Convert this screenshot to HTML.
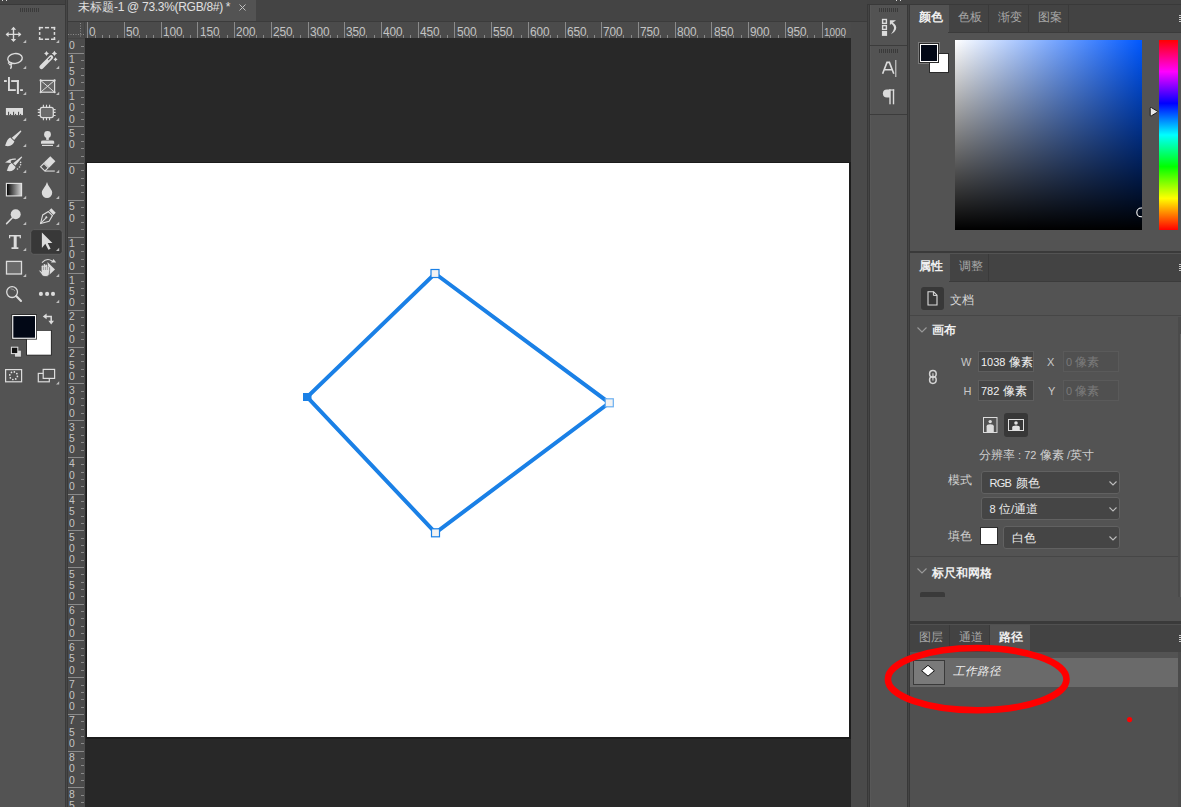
<!DOCTYPE html><html><head><meta charset="utf-8"><style>
*{margin:0;padding:0;box-sizing:border-box}
html,body{width:1181px;height:807px;overflow:hidden;background:#535353;font-family:"Liberation Sans",sans-serif;font-size:12px;color:#d6d6d6}
.a{position:absolute}
.t{position:absolute;white-space:nowrap;line-height:1}
svg{position:absolute;overflow:visible}
</style></head><body><div class="a" style="left:0px;top:0px;width:1181px;height:4px;background:#434343;"></div>
<div class="a" style="left:0px;top:4px;width:65px;height:1px;background:#393939;"></div>
<div class="a" style="left:2px;top:0px;width:1.3px;height:1.2px;background:#dcdcdc;"></div>
<div class="a" style="left:6px;top:0px;width:1.3px;height:1.2px;background:#dcdcdc;"></div>
<div class="a" style="left:896px;top:0px;width:1.3px;height:1.2px;background:#dcdcdc;"></div>
<div class="a" style="left:900px;top:0px;width:1.3px;height:1.2px;background:#dcdcdc;"></div>
<div class="a" style="left:870px;top:4px;width:311px;height:1px;background:#393939;"></div>
<div class="a" style="left:65px;top:0px;width:1px;height:807px;background:#3a3a3a;"></div>
<div class="a" style="left:66px;top:0px;width:1px;height:807px;background:#464646;"></div>
<div class="a" style="left:67px;top:0px;width:1px;height:807px;background:#3a3a3a;"></div>
<div class="a" style="left:68px;top:0px;width:799px;height:21px;background:#444444;"></div>
<div class="a" style="left:68px;top:0px;width:188px;height:21px;background:#535353;"></div>
<div class="a" style="left:68px;top:21px;width:799px;height:1px;background:#3b3b3b;"></div>
<div class="t" style="left:78px;top:1px;font-size:12px;color:#e0e0e0;">未标题<span style="letter-spacing:-0.3px">-1 @ 73.3%(RGB/8#) *</span></div>
<svg style="left:238.6px;top:3.6px" width="7" height="7"><path d="M0.5 0.5L6.5 6.5M6.5 0.5L0.5 6.5" stroke="#c0c0c0" stroke-width="1"/></svg>
<div class="a" style="left:68px;top:22px;width:783px;height:16px;background:#4b4b4b;"></div>
<div class="a" style="left:68px;top:38px;width:17px;height:769px;background:#4b4b4b;"></div>
<div class="a" style="left:68px;top:38px;width:17px;height:1px;background:#444444;"></div>
<div class="a" style="left:84px;top:22px;width:1px;height:16px;background:#434343;"></div>
<div class="a" style="left:85px;top:38px;width:766px;height:769px;background:#282828;"></div>
<div class="a" style="left:851px;top:22px;width:16px;height:785px;background:#4a4a4a;"></div>
<div class="a" style="left:85px;top:22px;width:766px;height:16px;overflow:hidden"><div class="a" style="left:2.20px;top:0;width:1px;height:16px;background:#8a8a8a"></div><div class="t" style="left:4.40px;top:4px;font-size:12px;color:#c4c4c4;transform:scaleX(0.98);transform-origin:0 0">0</div><div class="a" style="left:9.54px;top:13px;width:1px;height:3px;background:#8a8a8a"></div><div class="a" style="left:16.89px;top:13px;width:1px;height:3px;background:#8a8a8a"></div><div class="a" style="left:24.23px;top:13px;width:1px;height:3px;background:#8a8a8a"></div><div class="a" style="left:31.58px;top:13px;width:1px;height:3px;background:#8a8a8a"></div><div class="a" style="left:38.92px;top:0;width:1px;height:16px;background:#8a8a8a"></div><div class="t" style="left:41.12px;top:4px;font-size:12px;color:#c4c4c4;transform:scaleX(0.98);transform-origin:0 0">50</div><div class="a" style="left:46.26px;top:13px;width:1px;height:3px;background:#8a8a8a"></div><div class="a" style="left:53.61px;top:13px;width:1px;height:3px;background:#8a8a8a"></div><div class="a" style="left:60.95px;top:13px;width:1px;height:3px;background:#8a8a8a"></div><div class="a" style="left:68.30px;top:13px;width:1px;height:3px;background:#8a8a8a"></div><div class="a" style="left:75.64px;top:0;width:1px;height:16px;background:#8a8a8a"></div><div class="t" style="left:77.84px;top:4px;font-size:12px;color:#c4c4c4;transform:scaleX(0.98);transform-origin:0 0">100</div><div class="a" style="left:82.98px;top:13px;width:1px;height:3px;background:#8a8a8a"></div><div class="a" style="left:90.33px;top:13px;width:1px;height:3px;background:#8a8a8a"></div><div class="a" style="left:97.67px;top:13px;width:1px;height:3px;background:#8a8a8a"></div><div class="a" style="left:105.02px;top:13px;width:1px;height:3px;background:#8a8a8a"></div><div class="a" style="left:112.36px;top:0;width:1px;height:16px;background:#8a8a8a"></div><div class="t" style="left:114.56px;top:4px;font-size:12px;color:#c4c4c4;transform:scaleX(0.98);transform-origin:0 0">150</div><div class="a" style="left:119.70px;top:13px;width:1px;height:3px;background:#8a8a8a"></div><div class="a" style="left:127.05px;top:13px;width:1px;height:3px;background:#8a8a8a"></div><div class="a" style="left:134.39px;top:13px;width:1px;height:3px;background:#8a8a8a"></div><div class="a" style="left:141.74px;top:13px;width:1px;height:3px;background:#8a8a8a"></div><div class="a" style="left:149.08px;top:0;width:1px;height:16px;background:#8a8a8a"></div><div class="t" style="left:151.28px;top:4px;font-size:12px;color:#c4c4c4;transform:scaleX(0.98);transform-origin:0 0">200</div><div class="a" style="left:156.42px;top:13px;width:1px;height:3px;background:#8a8a8a"></div><div class="a" style="left:163.77px;top:13px;width:1px;height:3px;background:#8a8a8a"></div><div class="a" style="left:171.11px;top:13px;width:1px;height:3px;background:#8a8a8a"></div><div class="a" style="left:178.46px;top:13px;width:1px;height:3px;background:#8a8a8a"></div><div class="a" style="left:185.80px;top:0;width:1px;height:16px;background:#8a8a8a"></div><div class="t" style="left:188.00px;top:4px;font-size:12px;color:#c4c4c4;transform:scaleX(0.98);transform-origin:0 0">250</div><div class="a" style="left:193.14px;top:13px;width:1px;height:3px;background:#8a8a8a"></div><div class="a" style="left:200.49px;top:13px;width:1px;height:3px;background:#8a8a8a"></div><div class="a" style="left:207.83px;top:13px;width:1px;height:3px;background:#8a8a8a"></div><div class="a" style="left:215.18px;top:13px;width:1px;height:3px;background:#8a8a8a"></div><div class="a" style="left:222.52px;top:0;width:1px;height:16px;background:#8a8a8a"></div><div class="t" style="left:224.72px;top:4px;font-size:12px;color:#c4c4c4;transform:scaleX(0.98);transform-origin:0 0">300</div><div class="a" style="left:229.86px;top:13px;width:1px;height:3px;background:#8a8a8a"></div><div class="a" style="left:237.21px;top:13px;width:1px;height:3px;background:#8a8a8a"></div><div class="a" style="left:244.55px;top:13px;width:1px;height:3px;background:#8a8a8a"></div><div class="a" style="left:251.90px;top:13px;width:1px;height:3px;background:#8a8a8a"></div><div class="a" style="left:259.24px;top:0;width:1px;height:16px;background:#8a8a8a"></div><div class="t" style="left:261.44px;top:4px;font-size:12px;color:#c4c4c4;transform:scaleX(0.98);transform-origin:0 0">350</div><div class="a" style="left:266.58px;top:13px;width:1px;height:3px;background:#8a8a8a"></div><div class="a" style="left:273.93px;top:13px;width:1px;height:3px;background:#8a8a8a"></div><div class="a" style="left:281.27px;top:13px;width:1px;height:3px;background:#8a8a8a"></div><div class="a" style="left:288.62px;top:13px;width:1px;height:3px;background:#8a8a8a"></div><div class="a" style="left:295.96px;top:0;width:1px;height:16px;background:#8a8a8a"></div><div class="t" style="left:298.16px;top:4px;font-size:12px;color:#c4c4c4;transform:scaleX(0.98);transform-origin:0 0">400</div><div class="a" style="left:303.30px;top:13px;width:1px;height:3px;background:#8a8a8a"></div><div class="a" style="left:310.65px;top:13px;width:1px;height:3px;background:#8a8a8a"></div><div class="a" style="left:317.99px;top:13px;width:1px;height:3px;background:#8a8a8a"></div><div class="a" style="left:325.34px;top:13px;width:1px;height:3px;background:#8a8a8a"></div><div class="a" style="left:332.68px;top:0;width:1px;height:16px;background:#8a8a8a"></div><div class="t" style="left:334.88px;top:4px;font-size:12px;color:#c4c4c4;transform:scaleX(0.98);transform-origin:0 0">450</div><div class="a" style="left:340.02px;top:13px;width:1px;height:3px;background:#8a8a8a"></div><div class="a" style="left:347.37px;top:13px;width:1px;height:3px;background:#8a8a8a"></div><div class="a" style="left:354.71px;top:13px;width:1px;height:3px;background:#8a8a8a"></div><div class="a" style="left:362.06px;top:13px;width:1px;height:3px;background:#8a8a8a"></div><div class="a" style="left:369.40px;top:0;width:1px;height:16px;background:#8a8a8a"></div><div class="t" style="left:371.60px;top:4px;font-size:12px;color:#c4c4c4;transform:scaleX(0.98);transform-origin:0 0">500</div><div class="a" style="left:376.74px;top:13px;width:1px;height:3px;background:#8a8a8a"></div><div class="a" style="left:384.09px;top:13px;width:1px;height:3px;background:#8a8a8a"></div><div class="a" style="left:391.43px;top:13px;width:1px;height:3px;background:#8a8a8a"></div><div class="a" style="left:398.78px;top:13px;width:1px;height:3px;background:#8a8a8a"></div><div class="a" style="left:406.12px;top:0;width:1px;height:16px;background:#8a8a8a"></div><div class="t" style="left:408.32px;top:4px;font-size:12px;color:#c4c4c4;transform:scaleX(0.98);transform-origin:0 0">550</div><div class="a" style="left:413.46px;top:13px;width:1px;height:3px;background:#8a8a8a"></div><div class="a" style="left:420.81px;top:13px;width:1px;height:3px;background:#8a8a8a"></div><div class="a" style="left:428.15px;top:13px;width:1px;height:3px;background:#8a8a8a"></div><div class="a" style="left:435.50px;top:13px;width:1px;height:3px;background:#8a8a8a"></div><div class="a" style="left:442.84px;top:0;width:1px;height:16px;background:#8a8a8a"></div><div class="t" style="left:445.04px;top:4px;font-size:12px;color:#c4c4c4;transform:scaleX(0.98);transform-origin:0 0">600</div><div class="a" style="left:450.18px;top:13px;width:1px;height:3px;background:#8a8a8a"></div><div class="a" style="left:457.53px;top:13px;width:1px;height:3px;background:#8a8a8a"></div><div class="a" style="left:464.87px;top:13px;width:1px;height:3px;background:#8a8a8a"></div><div class="a" style="left:472.22px;top:13px;width:1px;height:3px;background:#8a8a8a"></div><div class="a" style="left:479.56px;top:0;width:1px;height:16px;background:#8a8a8a"></div><div class="t" style="left:481.76px;top:4px;font-size:12px;color:#c4c4c4;transform:scaleX(0.98);transform-origin:0 0">650</div><div class="a" style="left:486.90px;top:13px;width:1px;height:3px;background:#8a8a8a"></div><div class="a" style="left:494.25px;top:13px;width:1px;height:3px;background:#8a8a8a"></div><div class="a" style="left:501.59px;top:13px;width:1px;height:3px;background:#8a8a8a"></div><div class="a" style="left:508.94px;top:13px;width:1px;height:3px;background:#8a8a8a"></div><div class="a" style="left:516.28px;top:0;width:1px;height:16px;background:#8a8a8a"></div><div class="t" style="left:518.48px;top:4px;font-size:12px;color:#c4c4c4;transform:scaleX(0.98);transform-origin:0 0">700</div><div class="a" style="left:523.62px;top:13px;width:1px;height:3px;background:#8a8a8a"></div><div class="a" style="left:530.97px;top:13px;width:1px;height:3px;background:#8a8a8a"></div><div class="a" style="left:538.31px;top:13px;width:1px;height:3px;background:#8a8a8a"></div><div class="a" style="left:545.66px;top:13px;width:1px;height:3px;background:#8a8a8a"></div><div class="a" style="left:553.00px;top:0;width:1px;height:16px;background:#8a8a8a"></div><div class="t" style="left:555.20px;top:4px;font-size:12px;color:#c4c4c4;transform:scaleX(0.98);transform-origin:0 0">750</div><div class="a" style="left:560.34px;top:13px;width:1px;height:3px;background:#8a8a8a"></div><div class="a" style="left:567.69px;top:13px;width:1px;height:3px;background:#8a8a8a"></div><div class="a" style="left:575.03px;top:13px;width:1px;height:3px;background:#8a8a8a"></div><div class="a" style="left:582.38px;top:13px;width:1px;height:3px;background:#8a8a8a"></div><div class="a" style="left:589.72px;top:0;width:1px;height:16px;background:#8a8a8a"></div><div class="t" style="left:591.92px;top:4px;font-size:12px;color:#c4c4c4;transform:scaleX(0.98);transform-origin:0 0">800</div><div class="a" style="left:597.06px;top:13px;width:1px;height:3px;background:#8a8a8a"></div><div class="a" style="left:604.41px;top:13px;width:1px;height:3px;background:#8a8a8a"></div><div class="a" style="left:611.75px;top:13px;width:1px;height:3px;background:#8a8a8a"></div><div class="a" style="left:619.10px;top:13px;width:1px;height:3px;background:#8a8a8a"></div><div class="a" style="left:626.44px;top:0;width:1px;height:16px;background:#8a8a8a"></div><div class="t" style="left:628.64px;top:4px;font-size:12px;color:#c4c4c4;transform:scaleX(0.98);transform-origin:0 0">850</div><div class="a" style="left:633.78px;top:13px;width:1px;height:3px;background:#8a8a8a"></div><div class="a" style="left:641.13px;top:13px;width:1px;height:3px;background:#8a8a8a"></div><div class="a" style="left:648.47px;top:13px;width:1px;height:3px;background:#8a8a8a"></div><div class="a" style="left:655.82px;top:13px;width:1px;height:3px;background:#8a8a8a"></div><div class="a" style="left:663.16px;top:0;width:1px;height:16px;background:#8a8a8a"></div><div class="t" style="left:665.36px;top:4px;font-size:12px;color:#c4c4c4;transform:scaleX(0.98);transform-origin:0 0">900</div><div class="a" style="left:670.50px;top:13px;width:1px;height:3px;background:#8a8a8a"></div><div class="a" style="left:677.85px;top:13px;width:1px;height:3px;background:#8a8a8a"></div><div class="a" style="left:685.19px;top:13px;width:1px;height:3px;background:#8a8a8a"></div><div class="a" style="left:692.54px;top:13px;width:1px;height:3px;background:#8a8a8a"></div><div class="a" style="left:699.88px;top:0;width:1px;height:16px;background:#8a8a8a"></div><div class="t" style="left:702.08px;top:4px;font-size:12px;color:#c4c4c4;transform:scaleX(0.98);transform-origin:0 0">950</div><div class="a" style="left:707.22px;top:13px;width:1px;height:3px;background:#8a8a8a"></div><div class="a" style="left:714.57px;top:13px;width:1px;height:3px;background:#8a8a8a"></div><div class="a" style="left:721.91px;top:13px;width:1px;height:3px;background:#8a8a8a"></div><div class="a" style="left:729.26px;top:13px;width:1px;height:3px;background:#8a8a8a"></div><div class="a" style="left:736.60px;top:0;width:1px;height:16px;background:#8a8a8a"></div><div class="t" style="left:739.20px;top:5px;font-size:11px;color:#c4c4c4;transform:scaleX(0.9);transform-origin:0 0">1000</div><div class="a" style="left:743.94px;top:13px;width:1px;height:3px;background:#8a8a8a"></div><div class="a" style="left:751.29px;top:13px;width:1px;height:3px;background:#8a8a8a"></div><div class="a" style="left:758.63px;top:13px;width:1px;height:3px;background:#8a8a8a"></div><div class="a" style="left:765.98px;top:13px;width:1px;height:3px;background:#8a8a8a"></div><div class="a" style="left:773.32px;top:0;width:1px;height:16px;background:#8a8a8a"></div><div class="t" style="left:775.92px;top:5px;font-size:11px;color:#c4c4c4;transform:scaleX(0.9);transform-origin:0 0">1050</div><div class="a" style="left:780.66px;top:13px;width:1px;height:3px;background:#8a8a8a"></div><div class="a" style="left:788.01px;top:13px;width:1px;height:3px;background:#8a8a8a"></div><div class="a" style="left:795.35px;top:13px;width:1px;height:3px;background:#8a8a8a"></div><div class="a" style="left:802.70px;top:13px;width:1px;height:3px;background:#8a8a8a"></div></div>
<div class="a" style="left:68px;top:40px;width:17px;height:767px;overflow:hidden"><div class="a" style="left:0;top:-23.78px;width:16px;height:1px;background:#8a8a8a"></div><div class="t" style="left:1px;top:-22.28px;font-size:11.5px;color:#c4c4c4;transform:scaleX(0.9);transform-origin:0 0">2</div><div class="t" style="left:1px;top:-10.98px;font-size:11.5px;color:#c4c4c4;transform:scaleX(0.9);transform-origin:0 0">0</div><div class="t" style="left:1px;top:0.32px;font-size:11.5px;color:#c4c4c4;transform:scaleX(0.9);transform-origin:0 0">0</div><div class="a" style="left:13px;top:-16.44px;width:3px;height:1px;background:#8a8a8a"></div><div class="a" style="left:13px;top:-9.09px;width:3px;height:1px;background:#8a8a8a"></div><div class="a" style="left:13px;top:-1.75px;width:3px;height:1px;background:#8a8a8a"></div><div class="a" style="left:13px;top:5.60px;width:3px;height:1px;background:#8a8a8a"></div><div class="a" style="left:0;top:12.94px;width:16px;height:1px;background:#8a8a8a"></div><div class="t" style="left:1px;top:14.44px;font-size:11.5px;color:#c4c4c4;transform:scaleX(0.9);transform-origin:0 0">1</div><div class="t" style="left:1px;top:25.74px;font-size:11.5px;color:#c4c4c4;transform:scaleX(0.9);transform-origin:0 0">5</div><div class="t" style="left:1px;top:37.04px;font-size:11.5px;color:#c4c4c4;transform:scaleX(0.9);transform-origin:0 0">0</div><div class="a" style="left:13px;top:20.28px;width:3px;height:1px;background:#8a8a8a"></div><div class="a" style="left:13px;top:27.63px;width:3px;height:1px;background:#8a8a8a"></div><div class="a" style="left:13px;top:34.97px;width:3px;height:1px;background:#8a8a8a"></div><div class="a" style="left:13px;top:42.32px;width:3px;height:1px;background:#8a8a8a"></div><div class="a" style="left:0;top:49.66px;width:16px;height:1px;background:#8a8a8a"></div><div class="t" style="left:1px;top:51.16px;font-size:11.5px;color:#c4c4c4;transform:scaleX(0.9);transform-origin:0 0">1</div><div class="t" style="left:1px;top:62.46px;font-size:11.5px;color:#c4c4c4;transform:scaleX(0.9);transform-origin:0 0">0</div><div class="t" style="left:1px;top:73.76px;font-size:11.5px;color:#c4c4c4;transform:scaleX(0.9);transform-origin:0 0">0</div><div class="a" style="left:13px;top:57.00px;width:3px;height:1px;background:#8a8a8a"></div><div class="a" style="left:13px;top:64.35px;width:3px;height:1px;background:#8a8a8a"></div><div class="a" style="left:13px;top:71.69px;width:3px;height:1px;background:#8a8a8a"></div><div class="a" style="left:13px;top:79.04px;width:3px;height:1px;background:#8a8a8a"></div><div class="a" style="left:0;top:86.38px;width:16px;height:1px;background:#8a8a8a"></div><div class="t" style="left:1px;top:87.88px;font-size:11.5px;color:#c4c4c4;transform:scaleX(0.9);transform-origin:0 0">5</div><div class="t" style="left:1px;top:99.18px;font-size:11.5px;color:#c4c4c4;transform:scaleX(0.9);transform-origin:0 0">0</div><div class="a" style="left:13px;top:93.72px;width:3px;height:1px;background:#8a8a8a"></div><div class="a" style="left:13px;top:101.07px;width:3px;height:1px;background:#8a8a8a"></div><div class="a" style="left:13px;top:108.41px;width:3px;height:1px;background:#8a8a8a"></div><div class="a" style="left:13px;top:115.76px;width:3px;height:1px;background:#8a8a8a"></div><div class="a" style="left:0;top:123.10px;width:16px;height:1px;background:#8a8a8a"></div><div class="t" style="left:1px;top:124.60px;font-size:11.5px;color:#c4c4c4;transform:scaleX(0.9);transform-origin:0 0">0</div><div class="a" style="left:13px;top:130.44px;width:3px;height:1px;background:#8a8a8a"></div><div class="a" style="left:13px;top:137.79px;width:3px;height:1px;background:#8a8a8a"></div><div class="a" style="left:13px;top:145.13px;width:3px;height:1px;background:#8a8a8a"></div><div class="a" style="left:13px;top:152.48px;width:3px;height:1px;background:#8a8a8a"></div><div class="a" style="left:0;top:159.82px;width:16px;height:1px;background:#8a8a8a"></div><div class="t" style="left:1px;top:161.32px;font-size:11.5px;color:#c4c4c4;transform:scaleX(0.9);transform-origin:0 0">5</div><div class="t" style="left:1px;top:172.62px;font-size:11.5px;color:#c4c4c4;transform:scaleX(0.9);transform-origin:0 0">0</div><div class="a" style="left:13px;top:167.16px;width:3px;height:1px;background:#8a8a8a"></div><div class="a" style="left:13px;top:174.51px;width:3px;height:1px;background:#8a8a8a"></div><div class="a" style="left:13px;top:181.85px;width:3px;height:1px;background:#8a8a8a"></div><div class="a" style="left:13px;top:189.20px;width:3px;height:1px;background:#8a8a8a"></div><div class="a" style="left:0;top:196.54px;width:16px;height:1px;background:#8a8a8a"></div><div class="t" style="left:1px;top:198.04px;font-size:11.5px;color:#c4c4c4;transform:scaleX(0.9);transform-origin:0 0">1</div><div class="t" style="left:1px;top:209.34px;font-size:11.5px;color:#c4c4c4;transform:scaleX(0.9);transform-origin:0 0">0</div><div class="t" style="left:1px;top:220.64px;font-size:11.5px;color:#c4c4c4;transform:scaleX(0.9);transform-origin:0 0">0</div><div class="a" style="left:13px;top:203.88px;width:3px;height:1px;background:#8a8a8a"></div><div class="a" style="left:13px;top:211.23px;width:3px;height:1px;background:#8a8a8a"></div><div class="a" style="left:13px;top:218.57px;width:3px;height:1px;background:#8a8a8a"></div><div class="a" style="left:13px;top:225.92px;width:3px;height:1px;background:#8a8a8a"></div><div class="a" style="left:0;top:233.26px;width:16px;height:1px;background:#8a8a8a"></div><div class="t" style="left:1px;top:234.76px;font-size:11.5px;color:#c4c4c4;transform:scaleX(0.9);transform-origin:0 0">1</div><div class="t" style="left:1px;top:246.06px;font-size:11.5px;color:#c4c4c4;transform:scaleX(0.9);transform-origin:0 0">5</div><div class="t" style="left:1px;top:257.36px;font-size:11.5px;color:#c4c4c4;transform:scaleX(0.9);transform-origin:0 0">0</div><div class="a" style="left:13px;top:240.60px;width:3px;height:1px;background:#8a8a8a"></div><div class="a" style="left:13px;top:247.95px;width:3px;height:1px;background:#8a8a8a"></div><div class="a" style="left:13px;top:255.29px;width:3px;height:1px;background:#8a8a8a"></div><div class="a" style="left:13px;top:262.64px;width:3px;height:1px;background:#8a8a8a"></div><div class="a" style="left:0;top:269.98px;width:16px;height:1px;background:#8a8a8a"></div><div class="t" style="left:1px;top:271.48px;font-size:11.5px;color:#c4c4c4;transform:scaleX(0.9);transform-origin:0 0">2</div><div class="t" style="left:1px;top:282.78px;font-size:11.5px;color:#c4c4c4;transform:scaleX(0.9);transform-origin:0 0">0</div><div class="t" style="left:1px;top:294.08px;font-size:11.5px;color:#c4c4c4;transform:scaleX(0.9);transform-origin:0 0">0</div><div class="a" style="left:13px;top:277.32px;width:3px;height:1px;background:#8a8a8a"></div><div class="a" style="left:13px;top:284.67px;width:3px;height:1px;background:#8a8a8a"></div><div class="a" style="left:13px;top:292.01px;width:3px;height:1px;background:#8a8a8a"></div><div class="a" style="left:13px;top:299.36px;width:3px;height:1px;background:#8a8a8a"></div><div class="a" style="left:0;top:306.70px;width:16px;height:1px;background:#8a8a8a"></div><div class="t" style="left:1px;top:308.20px;font-size:11.5px;color:#c4c4c4;transform:scaleX(0.9);transform-origin:0 0">2</div><div class="t" style="left:1px;top:319.50px;font-size:11.5px;color:#c4c4c4;transform:scaleX(0.9);transform-origin:0 0">5</div><div class="t" style="left:1px;top:330.80px;font-size:11.5px;color:#c4c4c4;transform:scaleX(0.9);transform-origin:0 0">0</div><div class="a" style="left:13px;top:314.04px;width:3px;height:1px;background:#8a8a8a"></div><div class="a" style="left:13px;top:321.39px;width:3px;height:1px;background:#8a8a8a"></div><div class="a" style="left:13px;top:328.73px;width:3px;height:1px;background:#8a8a8a"></div><div class="a" style="left:13px;top:336.08px;width:3px;height:1px;background:#8a8a8a"></div><div class="a" style="left:0;top:343.42px;width:16px;height:1px;background:#8a8a8a"></div><div class="t" style="left:1px;top:344.92px;font-size:11.5px;color:#c4c4c4;transform:scaleX(0.9);transform-origin:0 0">3</div><div class="t" style="left:1px;top:356.22px;font-size:11.5px;color:#c4c4c4;transform:scaleX(0.9);transform-origin:0 0">0</div><div class="t" style="left:1px;top:367.52px;font-size:11.5px;color:#c4c4c4;transform:scaleX(0.9);transform-origin:0 0">0</div><div class="a" style="left:13px;top:350.76px;width:3px;height:1px;background:#8a8a8a"></div><div class="a" style="left:13px;top:358.11px;width:3px;height:1px;background:#8a8a8a"></div><div class="a" style="left:13px;top:365.45px;width:3px;height:1px;background:#8a8a8a"></div><div class="a" style="left:13px;top:372.80px;width:3px;height:1px;background:#8a8a8a"></div><div class="a" style="left:0;top:380.14px;width:16px;height:1px;background:#8a8a8a"></div><div class="t" style="left:1px;top:381.64px;font-size:11.5px;color:#c4c4c4;transform:scaleX(0.9);transform-origin:0 0">3</div><div class="t" style="left:1px;top:392.94px;font-size:11.5px;color:#c4c4c4;transform:scaleX(0.9);transform-origin:0 0">5</div><div class="t" style="left:1px;top:404.24px;font-size:11.5px;color:#c4c4c4;transform:scaleX(0.9);transform-origin:0 0">0</div><div class="a" style="left:13px;top:387.48px;width:3px;height:1px;background:#8a8a8a"></div><div class="a" style="left:13px;top:394.83px;width:3px;height:1px;background:#8a8a8a"></div><div class="a" style="left:13px;top:402.17px;width:3px;height:1px;background:#8a8a8a"></div><div class="a" style="left:13px;top:409.52px;width:3px;height:1px;background:#8a8a8a"></div><div class="a" style="left:0;top:416.86px;width:16px;height:1px;background:#8a8a8a"></div><div class="t" style="left:1px;top:418.36px;font-size:11.5px;color:#c4c4c4;transform:scaleX(0.9);transform-origin:0 0">4</div><div class="t" style="left:1px;top:429.66px;font-size:11.5px;color:#c4c4c4;transform:scaleX(0.9);transform-origin:0 0">0</div><div class="t" style="left:1px;top:440.96px;font-size:11.5px;color:#c4c4c4;transform:scaleX(0.9);transform-origin:0 0">0</div><div class="a" style="left:13px;top:424.20px;width:3px;height:1px;background:#8a8a8a"></div><div class="a" style="left:13px;top:431.55px;width:3px;height:1px;background:#8a8a8a"></div><div class="a" style="left:13px;top:438.89px;width:3px;height:1px;background:#8a8a8a"></div><div class="a" style="left:13px;top:446.24px;width:3px;height:1px;background:#8a8a8a"></div><div class="a" style="left:0;top:453.58px;width:16px;height:1px;background:#8a8a8a"></div><div class="t" style="left:1px;top:455.08px;font-size:11.5px;color:#c4c4c4;transform:scaleX(0.9);transform-origin:0 0">4</div><div class="t" style="left:1px;top:466.38px;font-size:11.5px;color:#c4c4c4;transform:scaleX(0.9);transform-origin:0 0">5</div><div class="t" style="left:1px;top:477.68px;font-size:11.5px;color:#c4c4c4;transform:scaleX(0.9);transform-origin:0 0">0</div><div class="a" style="left:13px;top:460.92px;width:3px;height:1px;background:#8a8a8a"></div><div class="a" style="left:13px;top:468.27px;width:3px;height:1px;background:#8a8a8a"></div><div class="a" style="left:13px;top:475.61px;width:3px;height:1px;background:#8a8a8a"></div><div class="a" style="left:13px;top:482.96px;width:3px;height:1px;background:#8a8a8a"></div><div class="a" style="left:0;top:490.30px;width:16px;height:1px;background:#8a8a8a"></div><div class="t" style="left:1px;top:491.80px;font-size:11.5px;color:#c4c4c4;transform:scaleX(0.9);transform-origin:0 0">5</div><div class="t" style="left:1px;top:503.10px;font-size:11.5px;color:#c4c4c4;transform:scaleX(0.9);transform-origin:0 0">0</div><div class="t" style="left:1px;top:514.40px;font-size:11.5px;color:#c4c4c4;transform:scaleX(0.9);transform-origin:0 0">0</div><div class="a" style="left:13px;top:497.64px;width:3px;height:1px;background:#8a8a8a"></div><div class="a" style="left:13px;top:504.99px;width:3px;height:1px;background:#8a8a8a"></div><div class="a" style="left:13px;top:512.33px;width:3px;height:1px;background:#8a8a8a"></div><div class="a" style="left:13px;top:519.68px;width:3px;height:1px;background:#8a8a8a"></div><div class="a" style="left:0;top:527.02px;width:16px;height:1px;background:#8a8a8a"></div><div class="t" style="left:1px;top:528.52px;font-size:11.5px;color:#c4c4c4;transform:scaleX(0.9);transform-origin:0 0">5</div><div class="t" style="left:1px;top:539.82px;font-size:11.5px;color:#c4c4c4;transform:scaleX(0.9);transform-origin:0 0">5</div><div class="t" style="left:1px;top:551.12px;font-size:11.5px;color:#c4c4c4;transform:scaleX(0.9);transform-origin:0 0">0</div><div class="a" style="left:13px;top:534.36px;width:3px;height:1px;background:#8a8a8a"></div><div class="a" style="left:13px;top:541.71px;width:3px;height:1px;background:#8a8a8a"></div><div class="a" style="left:13px;top:549.05px;width:3px;height:1px;background:#8a8a8a"></div><div class="a" style="left:13px;top:556.40px;width:3px;height:1px;background:#8a8a8a"></div><div class="a" style="left:0;top:563.74px;width:16px;height:1px;background:#8a8a8a"></div><div class="t" style="left:1px;top:565.24px;font-size:11.5px;color:#c4c4c4;transform:scaleX(0.9);transform-origin:0 0">6</div><div class="t" style="left:1px;top:576.54px;font-size:11.5px;color:#c4c4c4;transform:scaleX(0.9);transform-origin:0 0">0</div><div class="t" style="left:1px;top:587.84px;font-size:11.5px;color:#c4c4c4;transform:scaleX(0.9);transform-origin:0 0">0</div><div class="a" style="left:13px;top:571.08px;width:3px;height:1px;background:#8a8a8a"></div><div class="a" style="left:13px;top:578.43px;width:3px;height:1px;background:#8a8a8a"></div><div class="a" style="left:13px;top:585.77px;width:3px;height:1px;background:#8a8a8a"></div><div class="a" style="left:13px;top:593.12px;width:3px;height:1px;background:#8a8a8a"></div><div class="a" style="left:0;top:600.46px;width:16px;height:1px;background:#8a8a8a"></div><div class="t" style="left:1px;top:601.96px;font-size:11.5px;color:#c4c4c4;transform:scaleX(0.9);transform-origin:0 0">6</div><div class="t" style="left:1px;top:613.26px;font-size:11.5px;color:#c4c4c4;transform:scaleX(0.9);transform-origin:0 0">5</div><div class="t" style="left:1px;top:624.56px;font-size:11.5px;color:#c4c4c4;transform:scaleX(0.9);transform-origin:0 0">0</div><div class="a" style="left:13px;top:607.80px;width:3px;height:1px;background:#8a8a8a"></div><div class="a" style="left:13px;top:615.15px;width:3px;height:1px;background:#8a8a8a"></div><div class="a" style="left:13px;top:622.49px;width:3px;height:1px;background:#8a8a8a"></div><div class="a" style="left:13px;top:629.84px;width:3px;height:1px;background:#8a8a8a"></div><div class="a" style="left:0;top:637.18px;width:16px;height:1px;background:#8a8a8a"></div><div class="t" style="left:1px;top:638.68px;font-size:11.5px;color:#c4c4c4;transform:scaleX(0.9);transform-origin:0 0">7</div><div class="t" style="left:1px;top:649.98px;font-size:11.5px;color:#c4c4c4;transform:scaleX(0.9);transform-origin:0 0">0</div><div class="t" style="left:1px;top:661.28px;font-size:11.5px;color:#c4c4c4;transform:scaleX(0.9);transform-origin:0 0">0</div><div class="a" style="left:13px;top:644.52px;width:3px;height:1px;background:#8a8a8a"></div><div class="a" style="left:13px;top:651.87px;width:3px;height:1px;background:#8a8a8a"></div><div class="a" style="left:13px;top:659.21px;width:3px;height:1px;background:#8a8a8a"></div><div class="a" style="left:13px;top:666.56px;width:3px;height:1px;background:#8a8a8a"></div><div class="a" style="left:0;top:673.90px;width:16px;height:1px;background:#8a8a8a"></div><div class="t" style="left:1px;top:675.40px;font-size:11.5px;color:#c4c4c4;transform:scaleX(0.9);transform-origin:0 0">7</div><div class="t" style="left:1px;top:686.70px;font-size:11.5px;color:#c4c4c4;transform:scaleX(0.9);transform-origin:0 0">5</div><div class="t" style="left:1px;top:698.00px;font-size:11.5px;color:#c4c4c4;transform:scaleX(0.9);transform-origin:0 0">0</div><div class="a" style="left:13px;top:681.24px;width:3px;height:1px;background:#8a8a8a"></div><div class="a" style="left:13px;top:688.59px;width:3px;height:1px;background:#8a8a8a"></div><div class="a" style="left:13px;top:695.93px;width:3px;height:1px;background:#8a8a8a"></div><div class="a" style="left:13px;top:703.28px;width:3px;height:1px;background:#8a8a8a"></div><div class="a" style="left:0;top:710.62px;width:16px;height:1px;background:#8a8a8a"></div><div class="t" style="left:1px;top:712.12px;font-size:11.5px;color:#c4c4c4;transform:scaleX(0.9);transform-origin:0 0">8</div><div class="t" style="left:1px;top:723.42px;font-size:11.5px;color:#c4c4c4;transform:scaleX(0.9);transform-origin:0 0">0</div><div class="t" style="left:1px;top:734.72px;font-size:11.5px;color:#c4c4c4;transform:scaleX(0.9);transform-origin:0 0">0</div><div class="a" style="left:13px;top:717.96px;width:3px;height:1px;background:#8a8a8a"></div><div class="a" style="left:13px;top:725.31px;width:3px;height:1px;background:#8a8a8a"></div><div class="a" style="left:13px;top:732.65px;width:3px;height:1px;background:#8a8a8a"></div><div class="a" style="left:13px;top:740.00px;width:3px;height:1px;background:#8a8a8a"></div><div class="a" style="left:0;top:747.34px;width:16px;height:1px;background:#8a8a8a"></div><div class="t" style="left:1px;top:748.84px;font-size:11.5px;color:#c4c4c4;transform:scaleX(0.9);transform-origin:0 0">8</div><div class="t" style="left:1px;top:760.14px;font-size:11.5px;color:#c4c4c4;transform:scaleX(0.9);transform-origin:0 0">5</div><div class="t" style="left:1px;top:771.44px;font-size:11.5px;color:#c4c4c4;transform:scaleX(0.9);transform-origin:0 0">0</div><div class="a" style="left:13px;top:754.68px;width:3px;height:1px;background:#8a8a8a"></div><div class="a" style="left:13px;top:762.03px;width:3px;height:1px;background:#8a8a8a"></div><div class="a" style="left:13px;top:769.37px;width:3px;height:1px;background:#8a8a8a"></div><div class="a" style="left:13px;top:776.72px;width:3px;height:1px;background:#8a8a8a"></div></div>
<svg style="left:68px;top:22px" width="16" height="16"><path d="M12.5 1V16M0 12.5H16" stroke="#8a8a8a" stroke-width="1" stroke-dasharray="1 1.5"/></svg>
<div class="a" style="left:86px;top:162px;width:765px;height:577px;background:#1c1c1c;"></div>
<div class="a" style="left:87px;top:163px;width:762px;height:574px;background:#ffffff;"></div>
<svg style="left:0;top:0" width="1181" height="807">
<polygon points="435,273.5 609.3,402.8 435.5,532.8 307.2,397" fill="none" stroke="#1a80e6" stroke-width="4" stroke-linejoin="miter"/>
<rect x="431" y="269.5" width="8" height="8" fill="#f2f2f2" stroke="#1a80e6" stroke-width="1.2"/>
<rect x="605.3" y="398.8" width="8" height="8" fill="#f2f2f2" stroke="#6aaef0" stroke-width="1.2"/>
<rect x="431.5" y="528.8" width="8" height="8" fill="#f2f2f2" stroke="#1a80e6" stroke-width="1.2"/>
<rect x="303" y="393" width="8.5" height="8" fill="#1a80e6"/>
</svg>
<div class="a" style="left:867px;top:4px;width:3px;height:803px;background:#383838;"></div>
<div class="a" style="left:868px;top:5px;width:1px;height:802px;background:#444444;"></div>
<div class="a" style="left:870px;top:5px;width:1px;height:802px;background:#585858;"></div>
<div class="a" style="left:907px;top:5px;width:3px;height:802px;background:#383838;"></div>
<div class="a" style="left:908px;top:5px;width:1px;height:802px;background:#444444;"></div>
<div class="a" style="left:870px;top:45px;width:37px;height:1px;background:#3c3c3c;"></div>
<div class="a" style="left:870px;top:114px;width:37px;height:1px;background:#3c3c3c;"></div>
<svg style="left:0;top:0" width="66" height="400"><rect x="30.7" y="229.6" width="31.6" height="24.7" rx="3" fill="#383838" stroke="#5e5e5e" stroke-width="1"/><rect x="20" y="8" width="1" height="4" fill="#3a3a3a"/><rect x="22" y="8" width="1" height="4" fill="#3a3a3a"/><rect x="24" y="8" width="1" height="4" fill="#3a3a3a"/><rect x="26" y="8" width="1" height="4" fill="#3a3a3a"/><rect x="28" y="8" width="1" height="4" fill="#3a3a3a"/><rect x="30" y="8" width="1" height="4" fill="#3a3a3a"/><rect x="32" y="8" width="1" height="4" fill="#3a3a3a"/><rect x="34" y="8" width="1" height="4" fill="#3a3a3a"/><rect x="36" y="8" width="1" height="4" fill="#3a3a3a"/><rect x="38" y="8" width="1" height="4" fill="#3a3a3a"/><path d="M26.2 39.8L26.2 43.0L23.0 43.0Z" fill="#bdbdbd"/><path d="M59.2 39.8L59.2 43.0L56.0 43.0Z" fill="#bdbdbd"/><path d="M26.2 65.8L26.2 69.0L23.0 69.0Z" fill="#bdbdbd"/><path d="M59.2 65.8L59.2 69.0L56.0 69.0Z" fill="#bdbdbd"/><path d="M26.2 91.8L26.2 95.0L23.0 95.0Z" fill="#bdbdbd"/><path d="M59.2 91.8L59.2 95.0L56.0 95.0Z" fill="#bdbdbd"/><path d="M26.2 117.8L26.2 121.0L23.0 121.0Z" fill="#bdbdbd"/><path d="M59.2 117.8L59.2 121.0L56.0 121.0Z" fill="#bdbdbd"/><path d="M26.2 143.8L26.2 147.0L23.0 147.0Z" fill="#bdbdbd"/><path d="M59.2 143.8L59.2 147.0L56.0 147.0Z" fill="#bdbdbd"/><path d="M26.2 169.8L26.2 173.0L23.0 173.0Z" fill="#bdbdbd"/><path d="M59.2 169.8L59.2 173.0L56.0 173.0Z" fill="#bdbdbd"/><path d="M26.2 195.8L26.2 199.0L23.0 199.0Z" fill="#bdbdbd"/><path d="M59.2 195.8L59.2 199.0L56.0 199.0Z" fill="#bdbdbd"/><path d="M26.2 221.8L26.2 225.0L23.0 225.0Z" fill="#bdbdbd"/><path d="M59.2 221.8L59.2 225.0L56.0 225.0Z" fill="#bdbdbd"/><path d="M26.2 247.8L26.2 251.0L23.0 251.0Z" fill="#bdbdbd"/><path d="M59.2 247.8L59.2 251.0L56.0 251.0Z" fill="#bdbdbd"/><path d="M26.2 273.8L26.2 277.0L23.0 277.0Z" fill="#bdbdbd"/><path d="M59.2 273.8L59.2 277.0L56.0 277.0Z" fill="#bdbdbd"/><path d="M59.2 299.8L59.2 303.0L56.0 303.0Z" fill="#bdbdbd"/><path d="M59.2 381.3L59.2 384.5L56.0 384.5Z" fill="#bdbdbd"/><g stroke="#dcdcdc" stroke-width="1.4" fill="none"><path d="M13.5 27.9V40.9M6.5 34.4H20.5"/></g><g fill="#dcdcdc"><path d="M13.5 26.799999999999997L16.2 29.799999999999997H10.8Z"/><path d="M13.5 42.0L16.2 39.0H10.8Z"/><path d="M5.6 34.4L8.6 31.7V37.1Z"/><path d="M21.4 34.4L18.4 31.7V37.1Z"/></g><rect x="38.9" y="26.9" width="4.200000000000003" height="1.5" fill="#dcdcdc"/><rect x="38.9" y="38.5" width="4.200000000000003" height="1.5" fill="#dcdcdc"/><rect x="44.9" y="26.9" width="4.200000000000003" height="1.5" fill="#dcdcdc"/><rect x="44.9" y="38.5" width="4.200000000000003" height="1.5" fill="#dcdcdc"/><rect x="51" y="26.9" width="4.200000000000003" height="1.5" fill="#dcdcdc"/><rect x="51" y="38.5" width="4.200000000000003" height="1.5" fill="#dcdcdc"/><rect x="38.9" y="26.9" width="1.5" height="3.1000000000000014" fill="#dcdcdc"/><rect x="53.7" y="26.9" width="1.5" height="3.1000000000000014" fill="#dcdcdc"/><rect x="38.9" y="32" width="1.5" height="2.8999999999999986" fill="#dcdcdc"/><rect x="53.7" y="32" width="1.5" height="2.8999999999999986" fill="#dcdcdc"/><rect x="38.9" y="37" width="1.5" height="3" fill="#dcdcdc"/><rect x="53.7" y="37" width="1.5" height="3" fill="#dcdcdc"/><ellipse cx="15" cy="58.5" rx="7.3" ry="4.9" transform="rotate(-8 15 58.5)" fill="none" stroke="#dcdcdc" stroke-width="1.4"/><path d="M8 63.4Q10 61.6 12 63.6Q11 65.4 9 64.4M11 63.9Q12 66.4 10.5 68.9" fill="none" stroke="#dcdcdc" stroke-width="1.3"/><path d="M41.5 66.9L51.1 57.3" stroke="#dcdcdc" stroke-width="4.2" stroke-linecap="round"/><path d="M48.5 59.699999999999996L50.5 57.699999999999996" stroke="#535353" stroke-width="1.1" stroke-linecap="round"/><path d="M46.5 51.1Q47.172 52.828 48.9 53.5Q47.172 54.172 46.5 55.9Q45.828 54.172 44.1 53.5Q45.828 52.828 46.5 51.1Z" fill="#dcdcdc"/><path d="M54.4 50.699999999999996Q55.156 52.644 57.1 53.4Q55.156 54.156 54.4 56.1Q53.644 54.156 51.699999999999996 53.4Q53.644 52.644 54.4 50.699999999999996Z" fill="#dcdcdc"/><path d="M55.5 57.3Q56.088 58.812 57.6 59.4Q56.088 59.988 55.5 61.5Q54.912 59.988 53.4 59.4Q54.912 58.812 55.5 57.3Z" fill="#dcdcdc"/><g fill="#dcdcdc"><rect x="8" y="77.0" width="1.9" height="14"/><rect x="8" y="89.2" width="7.8" height="1.8"/><rect x="4" y="80.10000000000001" width="2.8" height="1.9"/><rect x="11.2" y="80.10000000000001" width="7.7" height="1.9"/><rect x="16.9" y="80.10000000000001" width="2" height="13.9"/><rect x="20.1" y="89.2" width="2.8" height="1.8"/></g><rect x="40.6" y="80.4" width="14" height="11.8" fill="#666" stroke="#dcdcdc" stroke-width="1.2"/><path d="M40.6 80.4L54.6 92.2M54.6 80.4L40.6 92.2" stroke="#dcdcdc" stroke-width="1"/><circle cx="40.6" cy="80.4" r="1.05" fill="#dcdcdc"/><circle cx="54.6" cy="80.4" r="1.05" fill="#dcdcdc"/><circle cx="40.6" cy="92.2" r="1.05" fill="#dcdcdc"/><circle cx="54.6" cy="92.2" r="1.05" fill="#dcdcdc"/><rect x="5.9" y="108.0" width="17.1" height="7.1" fill="#dcdcdc"/><rect x="8" y="111.8" width="1.1" height="3.4000000000000057" fill="#535353"/><rect x="10" y="113.9" width="1.1" height="1.2999999999999972" fill="#535353"/><rect x="13" y="111.8" width="1.1" height="3.4000000000000057" fill="#535353"/><rect x="15" y="113.9" width="1.1" height="1.2999999999999972" fill="#535353"/><rect x="18" y="111.8" width="1.1" height="3.4000000000000057" fill="#535353"/><rect x="20" y="113.9" width="1.1" height="1.2999999999999972" fill="#535353"/><rect x="40.3" y="107.4" width="13" height="10.2" rx="2" fill="#6a6a6a" stroke="#dcdcdc" stroke-width="1.3"/><path d="M43.4 104.80000000000001V107.4M43.4 117.60000000000001V120.2M46.5 104.80000000000001V107.4M46.5 117.60000000000001V120.2M49.6 104.80000000000001V107.4M49.6 117.60000000000001V120.2M37.8 109.60000000000001H40.3M53.3 109.60000000000001H55.6M37.8 112.4H40.3M53.3 112.4H55.6M37.8 115.5H40.3M53.3 115.5H55.6" stroke="#dcdcdc" stroke-width="1.1"/><g transform="translate(20.9 131.0) rotate(45)"><path d="M-0.6 0Q0 -0.6 0.6 0L1.7 11.2H-1.7Z M-2.9 12.1H2.9C4.4 15.2 3.6 19.2 -0.8 21.6C-1.4 19.2 -4.4 15.8 -2.9 12.1Z" fill="#dcdcdc"/></g><circle cx="47.5" cy="134.4" r="3.4" fill="#dcdcdc"/><rect x="46.2" y="136.9" width="2.6" height="3" fill="#dcdcdc"/><path d="M41 143.70000000000002V141.8Q41 140.6 43 140.6H52.2Q54.2 140.6 54.2 141.8V143.70000000000002Z" fill="#dcdcdc"/><rect x="42" y="144.8" width="11" height="1.2" fill="#dcdcdc"/><g transform="translate(21.8 156.8) rotate(45) scale(0.95)"><path d="M-0.6 0Q0 -0.6 0.6 0L1.7 11.2H-1.7Z M-2.9 12.1H2.9C4.4 15.2 3.6 19.2 -0.8 21.6C-1.4 19.2 -4.4 15.8 -2.9 12.1Z" fill="#dcdcdc"/></g><path d="M9.8 160.5Q12.5 158.8 15.8 159.20000000000002" fill="none" stroke="#dcdcdc" stroke-width="1.2"/><path d="M5 162.6L10.6 158.8L10.9 163.0Z" fill="#dcdcdc"/><circle cx="20.6" cy="162.4" r="0.8" fill="#dcdcdc"/><circle cx="20.6" cy="164.8" r="0.8" fill="#dcdcdc"/><circle cx="19.5" cy="167.0" r="0.8" fill="#dcdcdc"/><circle cx="17.5" cy="169.0" r="0.8" fill="#dcdcdc"/><g transform="translate(47.2 164.4) rotate(45)"><rect x="-3.6" y="-8" width="7.2" height="9" fill="#dcdcdc"/><rect x="-3.05" y="1.6" width="6.1" height="4.8" fill="none" stroke="#dcdcdc" stroke-width="1.1"/></g><rect x="45" y="170.5" width="9.8" height="1.1" fill="#dcdcdc"/><defs><linearGradient id="gg" x1="0" x2="1"><stop offset="0" stop-color="#000"/><stop offset="1" stop-color="#d8d8d8"/></linearGradient></defs><rect x="6.4" y="183.4" width="15.2" height="12.5" fill="url(#gg)" stroke="#e4e4e4" stroke-width="1.1"/><path d="M47 182.0Q47.8 185.4 50.6 188.8Q52.2 190.8 52.2 192.8A5.2 5.2 0 0 1 41.8 192.8Q41.8 190.8 43.4 188.8Q46.2 185.4 47 182.0Z" fill="#dcdcdc"/><circle cx="15.7" cy="214.20000000000002" r="5" fill="#dcdcdc"/><path d="M12.4 217.8L6.6 223.6" stroke="#dcdcdc" stroke-width="1.5" stroke-linecap="round"/><g transform="translate(-0.9 1) rotate(45 47.5 216.4)" fill="none" stroke="#dcdcdc" stroke-width="1.1"><rect x="44.4" y="206.6" width="6.2" height="3.2" fill="#dcdcdc" stroke="none"/><path d="M44.6 211.0H50.4L52 217.4L47.5 224.9L43 217.4Z"/><path d="M47.5 215.8V224.9"/></g><circle cx="46.3" cy="217.20000000000002" r="1" fill="#dcdcdc"/><path d="M9 238.3V235.1H20.9V238.3H19.7V236.5H16.7V247.3H18.4V249.1H11.5V247.3H13.7V236.5H10.2V238.3Z" fill="#dcdcdc"/><path d="M41.9 232.6V248.0L45.3 243.8L48.4 249.8L50.6 248.70000000000002L47.7 243.1H52.4Z" fill="#dcdcdc"/><rect x="6.5" y="261.4" width="15" height="12.6" fill="#6a6a6a" stroke="#dcdcdc" stroke-width="1.3"/><path d="M42 262.59999999999997Q47 257.4 52 261.0" fill="none" stroke="#dcdcdc" stroke-width="1.1"/><path d="M51 262.59999999999997L56.2 262.59999999999997L53.5 259.0Z" fill="#dcdcdc"/><path d="M47.4 262.09999999999997L55 269.4L49.4 274.79999999999995Z" fill="#dcdcdc"/><path d="M40.6 273.0L42.4 275.79999999999995Q43.6 276.59999999999997 46 276.59999999999997Q48.4 276.59999999999997 49.2 274.4L49.6 270.4L49.6 267.59999999999997Q48.8 266.59999999999997 48 267.59999999999997L47.6 265.9Q46.8 264.59999999999997 46 265.9L45.6 265.0Q44.8 263.79999999999995 44 265.0L43.6 266.0Q42.8 265.0 42 266.0L41.8 271.79999999999995L40 270.2Q38.8 269.79999999999995 38.9 271.0Z" fill="#dcdcdc" stroke="#535353" stroke-width="0.7"/><path d="M42.45 266.2V271.4" stroke="#dcdcdc" stroke-width="1.6" stroke-linecap="round"/><path d="M44.45 264.79999999999995V271.4" stroke="#dcdcdc" stroke-width="1.6" stroke-linecap="round"/><path d="M46.4 265.29999999999995V271.4" stroke="#dcdcdc" stroke-width="1.6" stroke-linecap="round"/><path d="M48.3 267.2V271.4" stroke="#dcdcdc" stroke-width="1.6" stroke-linecap="round"/><path d="M43.45 266.9V270.0" stroke="#535353" stroke-width="0.45"/><path d="M45.45 266.9V270.0" stroke="#535353" stroke-width="0.45"/><path d="M47.35 266.9V270.0" stroke="#535353" stroke-width="0.45"/><circle cx="12.1" cy="292.09999999999997" r="5.4" fill="none" stroke="#dcdcdc" stroke-width="1.3"/><path d="M16.2 296.0L21 301.0" stroke="#dcdcdc" stroke-width="2.1" stroke-linecap="round"/><path d="M10.5 288.79999999999995Q13.6 288.79999999999995 15 291.0" fill="none" stroke="#aaa" stroke-width="0.8"/><circle cx="40.9" cy="293.9" r="2.05" fill="#dcdcdc"/><circle cx="47.1" cy="293.9" r="2.05" fill="#dcdcdc"/><circle cx="53" cy="293.9" r="2.05" fill="#dcdcdc"/><rect x="26.2" y="330" width="25.5" height="25.5" fill="#262626"/><rect x="27" y="330.8" width="23.9" height="23.9" fill="#ffffff"/><rect x="11.4" y="314.2" width="25.5" height="25.4" fill="#262626"/><rect x="12.2" y="315" width="23.9" height="23.8" fill="#ffffff"/><rect x="13.3" y="316.1" width="21.7" height="21.6" fill="#020816"/><rect x="14.6" y="350.2" width="6.6" height="6.8" fill="#d8d8d8" stroke="#3a3a3a" stroke-width="0.6"/><rect x="11.4" y="347.2" width="6.4" height="6.4" fill="#111" stroke="#e0e0e0" stroke-width="1"/><path d="M45.5 316.4H51.2V321.5" fill="none" stroke="#dcdcdc" stroke-width="1.5"/><path d="M42.8 316.4L46.6 313.6V319.2Z" fill="#dcdcdc"/><path d="M51.2 324.4L48.4 320.8H54Z" fill="#dcdcdc"/><rect x="5.6" y="369.6" width="16" height="12.2" fill="none" stroke="#dcdcdc" stroke-width="1.2"/><circle cx="17.42" cy="376.47" r="0.85" fill="#e6e6e6"/><circle cx="15.75" cy="378.95" r="0.85" fill="#e6e6e6"/><circle cx="12.83" cy="379.52" r="0.85" fill="#e6e6e6"/><circle cx="10.35" cy="377.85" r="0.85" fill="#e6e6e6"/><circle cx="9.78" cy="374.93" r="0.85" fill="#e6e6e6"/><circle cx="11.45" cy="372.45" r="0.85" fill="#e6e6e6"/><circle cx="14.37" cy="371.88" r="0.85" fill="#e6e6e6"/><circle cx="16.85" cy="373.55" r="0.85" fill="#e6e6e6"/><rect x="38.3" y="373.4" width="11" height="8.4" fill="none" stroke="#dcdcdc" stroke-width="1.2"/><rect x="43.2" y="369.4" width="11.4" height="9" fill="#535353" stroke="#dcdcdc" stroke-width="1.2"/></svg>
<svg style="left:870px;top:0" width="37" height="120"><rect x="9" y="8" width="1" height="4" fill="#3a3a3a"/><rect x="11" y="8" width="1" height="4" fill="#3a3a3a"/><rect x="13" y="8" width="1" height="4" fill="#3a3a3a"/><rect x="15" y="8" width="1" height="4" fill="#3a3a3a"/><rect x="17" y="8" width="1" height="4" fill="#3a3a3a"/><rect x="19" y="8" width="1" height="4" fill="#3a3a3a"/><rect x="21" y="8" width="1" height="4" fill="#3a3a3a"/><rect x="23" y="8" width="1" height="4" fill="#3a3a3a"/><rect x="25" y="8" width="1" height="4" fill="#3a3a3a"/><rect x="27" y="8" width="1" height="4" fill="#3a3a3a"/><rect x="9" y="49" width="1" height="4" fill="#3a3a3a"/><rect x="11" y="49" width="1" height="4" fill="#3a3a3a"/><rect x="13" y="49" width="1" height="4" fill="#3a3a3a"/><rect x="15" y="49" width="1" height="4" fill="#3a3a3a"/><rect x="17" y="49" width="1" height="4" fill="#3a3a3a"/><rect x="19" y="49" width="1" height="4" fill="#3a3a3a"/><rect x="21" y="49" width="1" height="4" fill="#3a3a3a"/><rect x="23" y="49" width="1" height="4" fill="#3a3a3a"/><rect x="25" y="49" width="1" height="4" fill="#3a3a3a"/><rect x="27" y="49" width="1" height="4" fill="#3a3a3a"/><rect x="12.6" y="19.5" width="3.8" height="3.8" fill="none" stroke="#dcdcdc" stroke-width="1.4"/><rect x="12.6" y="25.6" width="3.8" height="3.8" fill="none" stroke="#dcdcdc" stroke-width="1.4"/><rect x="11.9" y="31" width="5.2" height="4.9" fill="#dcdcdc"/><path d="M19.9 20.2L26 20.2L19.9 24.9Z" fill="#dcdcdc"/><path d="M22.4 22.6Q27.6 25.6 25.8 29.8Q24.6 32.6 21 34.2Q23.6 31.2 24 28.6Q24.3 25.8 21.2 23.8Z" fill="#dcdcdc"/><path d="M12.6 73.8L17 62.4H19.4L23.8 73.8M14.6 69.8H21.8" fill="none" stroke="#dcdcdc" stroke-width="1.6"/><rect x="25.3" y="60" width="1" height="17" fill="#dcdcdc"/><path d="M20 89.4H17A4.1 4.1 0 0 0 17 97.6H20Z" fill="#dcdcdc"/><rect x="19.3" y="89.4" width="1.4" height="14.9" fill="#dcdcdc"/><rect x="22.8" y="89.4" width="1.4" height="14.9" fill="#dcdcdc"/><rect x="19.3" y="89.4" width="4.9" height="1.2" fill="#dcdcdc"/></svg>
<div class="a" style="left:910px;top:5px;width:271px;height:246px;background:#535353;"></div>
<div class="a" style="left:910px;top:4.7px;width:271px;height:28px;background:#434343;"></div>
<div class="a" style="left:910px;top:4.7px;width:39px;height:28px;background:#535353;"></div>
<div class="t" style="left:919.3px;top:12.100000000000001px;font-size:11.5px;color:#f0f0f0;font-weight:bold">颜色</div>
<div class="a" style="left:988px;top:4.7px;width:1px;height:28px;background:#3a3a3a;"></div>
<div class="t" style="left:958.3px;top:12.100000000000001px;font-size:11.5px;color:#a6a6a6;">色板</div>
<div class="a" style="left:1028px;top:4.7px;width:1px;height:28px;background:#3a3a3a;"></div>
<div class="t" style="left:998.3px;top:12.100000000000001px;font-size:11.5px;color:#a6a6a6;">渐变</div>
<div class="a" style="left:1068px;top:4.7px;width:1px;height:28px;background:#3a3a3a;"></div>
<div class="t" style="left:1038.3px;top:12.100000000000001px;font-size:11.5px;color:#a6a6a6;">图案</div>
<div class="a" style="left:910px;top:31.7px;width:271px;height:1px;background:#3b3b3b;"></div>
<div class="a" style="left:910px;top:31.7px;width:38px;height:1px;background:#535353;"></div>
<svg style="left:1178.8px;top:14.7px" width="4" height="8"><path d="M0 0.5H4M0 2.5H4M0 4.5H4M0 6.5H4" stroke="#c8c8c8" stroke-width="1"/></svg>
<div class="a" style="left:918px;top:42px;width:22px;height:22px;background:#7a7a7a;"></div>
<div class="a" style="left:919px;top:43px;width:20px;height:20px;background:#2a2a2a;"></div>
<div class="a" style="left:929px;top:53px;width:20px;height:20px;background:#2a2a2a;"></div>
<div class="a" style="left:930px;top:54px;width:18px;height:18px;background:#ffffff;"></div>
<div class="a" style="left:919px;top:43px;width:20px;height:20px;background:#2a2a2a;"></div>
<div class="a" style="left:920px;top:44px;width:18px;height:18px;background:#ffffff;"></div>
<div class="a" style="left:921px;top:45px;width:16px;height:16px;background:#020816;"></div>
<div class="a" style="left:955px;top:40px;width:187px;height:190px;background:linear-gradient(to bottom,rgba(0,0,0,0),#000),linear-gradient(to right,#fff,#0058ff)"></div>
<div class="a" style="left:1159px;top:40px;width:19px;height:190px;background:linear-gradient(to bottom,#f00 0%,#f0f 16.67%,#00f 33.33%,#0ff 50%,#0f0 66.67%,#ff0 83.33%,#f00 100%)"></div>
<svg style="left:1148px;top:106px" width="12" height="12"><path d="M2.2 2.2Q2.2 1 3.4 1.6L9.4 5.2Q10.2 5.7 9.4 6.2L3.4 9.8Q2.2 10.4 2.2 9.2Z" fill="#e6e6e6" stroke="#1a1a1a" stroke-width="1"/></svg>
<div class="a" style="left:955px;top:40px;width:187px;height:190px;overflow:hidden"><svg style="left:0;top:0" width="187" height="190"><circle cx="186.2" cy="172.4" r="4.4" fill="none" stroke="#fff" stroke-width="1.1"/></svg></div>
<div class="a" style="left:910px;top:251px;width:271px;height:2px;background:#3a3a3a;"></div>
<div class="a" style="left:910px;top:253px;width:271px;height:368px;background:#535353;"></div>
<div class="a" style="left:910px;top:253.9px;width:271px;height:28px;background:#434343;"></div>
<div class="a" style="left:910px;top:253.9px;width:39.5px;height:28px;background:#535353;"></div>
<div class="t" style="left:919.3px;top:261.3px;font-size:11.5px;color:#f0f0f0;font-weight:bold">属性</div>
<div class="a" style="left:988px;top:253.9px;width:1px;height:28px;background:#3a3a3a;"></div>
<div class="t" style="left:958.8px;top:261.3px;font-size:11.5px;color:#a6a6a6;">调整</div>
<div class="a" style="left:910px;top:280.9px;width:271px;height:1px;background:#3b3b3b;"></div>
<div class="a" style="left:910px;top:280.9px;width:38.5px;height:1px;background:#535353;"></div>
<svg style="left:1178.8px;top:263.9px" width="4" height="8"><path d="M0 0.5H4M0 2.5H4M0 4.5H4M0 6.5H4" stroke="#c8c8c8" stroke-width="1"/></svg>
<div class="a" style="left:921px;top:287px;width:23px;height:23px;background:#383838;border-radius:3px"></div>
<svg style="left:921px;top:287px" width="23" height="23"><path d="M7 4.8H12.6L16 8.2V18H7Z" fill="none" stroke="#dcdcdc" stroke-width="1.1"/><path d="M12.4 4.8V8.4H16" fill="none" stroke="#dcdcdc" stroke-width="1"/></svg>
<div class="t" style="left:950px;top:294px;font-size:12px;color:#d8d8d8;">文档</div>
<div class="a" style="left:910px;top:315px;width:271px;height:1px;background:#464646;"></div>
<svg style="left:917px;top:327px" width="10" height="6"><path d="M0.5 0.5L5 5L9.5 0.5" fill="none" stroke="#9a9a9a" stroke-width="1.1"/></svg>
<div class="t" style="left:932px;top:324px;font-size:12px;color:#f0f0f0;font-weight:bold">画布</div>
<div class="a" style="left:1178px;top:317px;width:3px;height:280px;background:#4b4b4b;"></div>
<div class="a" style="left:1180px;top:334px;width:1px;height:263px;background:#626262;"></div>
<div class="t" style="left:961px;top:357px;font-size:11px;color:#c8c8c8;">W</div>
<div class="t" style="left:963.5px;top:386px;font-size:11px;color:#c8c8c8;">H</div>
<div class="t" style="left:1047px;top:357px;font-size:11px;color:#c8c8c8;">X</div>
<div class="t" style="left:1048px;top:386px;font-size:11px;color:#c8c8c8;">Y</div>
<div class="a" style="left:978px;top:351px;width:56px;height:21px;background:#454545;border:1px solid #5e5e5e"></div>
<div class="t" style="left:981px;top:355.8px;font-size:12px;color:#f0f0f0;"><span style="font-size:11px">1038</span> 像素</div>
<div class="a" style="left:978px;top:380px;width:56px;height:21px;background:#454545;border:1px solid #5e5e5e"></div>
<div class="t" style="left:981px;top:384.8px;font-size:12px;color:#f0f0f0;"><span style="font-size:11px">782</span> 像素</div>
<div class="a" style="left:1063px;top:351px;width:56px;height:21px;background:#505050;border:1px solid #5a5a5a"></div>
<div class="t" style="left:1066px;top:355.8px;font-size:12px;color:#7a7a7a;"><span style="font-size:11px">0</span> 像素</div>
<div class="a" style="left:1063px;top:380px;width:56px;height:21px;background:#505050;border:1px solid #5a5a5a"></div>
<div class="t" style="left:1066px;top:384.8px;font-size:12px;color:#7a7a7a;"><span style="font-size:11px">0</span> 像素</div>
<svg style="left:927px;top:368px" width="12" height="18"><rect x="2.6" y="2.4" width="6.6" height="7" rx="3.3" fill="none" stroke="#d4d4d4" stroke-width="1.5"/><rect x="2.6" y="8.4" width="6.6" height="7" rx="3.3" fill="none" stroke="#d4d4d4" stroke-width="1.5"/><rect x="5.4" y="5.2" width="1.1" height="7.4" fill="#d4d4d4"/></svg>
<svg style="left:982px;top:416px" width="16" height="18"><rect x="1.5" y="1.5" width="13.5" height="15" fill="none" stroke="#dcdcdc" stroke-width="1"/><circle cx="8.2" cy="5.6" r="1.7" fill="#dcdcdc"/><path d="M4.6 16V10.2Q4.6 8.2 8.2 8.2Q11.8 8.2 11.8 10.2V16Z" fill="#dcdcdc"/></svg>
<div class="a" style="left:1004px;top:413px;width:24px;height:24px;background:#383838;border-radius:3px"></div>
<svg style="left:1004px;top:413px" width="24" height="24"><rect x="4.5" y="6.5" width="15" height="11" fill="none" stroke="#e0e0e0" stroke-width="1"/><circle cx="12" cy="10" r="1.8" fill="#e0e0e0"/><path d="M8.2 17V14.4Q8.2 12.6 12 12.6Q15.8 12.6 15.8 14.4V17Z" fill="#e0e0e0"/></svg>
<div class="t" style="left:979px;top:449px;font-size:12px;color:#cfcfcf;">分辨率<span style="font-size:11px">&nbsp;:&nbsp;72</span> 像素 <span style="font-size:11px">/</span>英寸</div>
<div class="t" style="left:948px;top:474px;font-size:12px;color:#cfcfcf;">模式</div>
<div class="t" style="left:948px;top:530px;font-size:12px;color:#cfcfcf;">填色</div>
<div class="a" style="left:980.5px;top:471px;width:139px;height:23px;background:#454545;border:1px solid #616161;border-radius:3px"></div>
<div class="t" style="left:989.5px;top:477px;font-size:12px;color:#ececec;"><span style="font-size:11px;letter-spacing:-0.7px;margin-right:1.6px">RGB</span> 颜色</div>
<svg style="left:1108.5px;top:481px" width="8" height="5"><path d="M0.5 0.5L4 4L7.5 0.5" fill="none" stroke="#bdbdbd" stroke-width="1.1"/></svg>
<div class="a" style="left:980.5px;top:497px;width:139px;height:23px;background:#454545;border:1px solid #616161;border-radius:3px"></div>
<div class="t" style="left:989.5px;top:503px;font-size:12px;color:#ececec;"><span style="font-size:11px">8</span> 位<span style="font-size:11px">/</span>通道</div>
<svg style="left:1108.5px;top:507px" width="8" height="5"><path d="M0.5 0.5L4 4L7.5 0.5" fill="none" stroke="#bdbdbd" stroke-width="1.1"/></svg>
<div class="a" style="left:1002.5px;top:526px;width:117px;height:23px;background:#454545;border:1px solid #616161;border-radius:3px"></div>
<div class="t" style="left:1012px;top:532px;font-size:12px;color:#ececec;">白色</div>
<svg style="left:1108.5px;top:536px" width="8" height="5"><path d="M0.5 0.5L4 4L7.5 0.5" fill="none" stroke="#bdbdbd" stroke-width="1.1"/></svg>
<div class="a" style="left:980px;top:527px;width:18px;height:18px;background:#2e2e2e;"></div>
<div class="a" style="left:981px;top:528px;width:16px;height:16px;background:#ffffff;"></div>
<div class="a" style="left:910px;top:556px;width:268px;height:1px;background:#464646;"></div>
<svg style="left:917px;top:568px" width="10" height="6"><path d="M0.5 0.5L5 5L9.5 0.5" fill="none" stroke="#9a9a9a" stroke-width="1.1"/></svg>
<div class="t" style="left:932px;top:566.5px;font-size:12px;color:#f0f0f0;font-weight:bold">标尺和网格</div>
<div class="a" style="left:920px;top:592px;width:25px;height:5px;background:#3a3a3a;border-radius:2px 2px 0 0"></div>
<div class="a" style="left:910px;top:621px;width:271px;height:3px;background:#3a3a3a;"></div>
<div class="a" style="left:910px;top:624px;width:271px;height:183px;background:#505050;"></div>
<div class="a" style="left:910px;top:624.5px;width:271px;height:28px;background:#434343;"></div>
<div class="a" style="left:949px;top:624.5px;width:1px;height:28px;background:#3a3a3a;"></div>
<div class="t" style="left:919.3px;top:631.9px;font-size:11.5px;color:#a6a6a6;">图层</div>
<div class="a" style="left:989px;top:624.5px;width:1px;height:28px;background:#3a3a3a;"></div>
<div class="t" style="left:959.3px;top:631.9px;font-size:11.5px;color:#a6a6a6;">通道</div>
<div class="a" style="left:990px;top:624.5px;width:39.5px;height:28px;background:#535353;"></div>
<div class="t" style="left:999.3px;top:631.9px;font-size:11.5px;color:#f0f0f0;font-weight:bold">路径</div>
<div class="a" style="left:910px;top:651.5px;width:271px;height:1px;background:#3b3b3b;"></div>
<div class="a" style="left:990px;top:651.5px;width:38.5px;height:1px;background:#535353;"></div>
<svg style="left:1178.8px;top:634.5px" width="4" height="8"><path d="M0 0.5H4M0 2.5H4M0 4.5H4M0 6.5H4" stroke="#c8c8c8" stroke-width="1"/></svg>
<div class="a" style="left:910px;top:652px;width:271px;height:6px;background:#535353;"></div>
<div class="a" style="left:910px;top:658px;width:268px;height:29px;background:#6a6a6a;"></div>
<div class="a" style="left:913px;top:660px;width:32px;height:25px;background:#7a7a7a;border:1px solid #3a3a3a"></div>
<svg style="left:913px;top:660px" width="32" height="25"><path d="M15 5.3L21.4 10.7L15 16.1L8.6 10.7Z" fill="#fff" stroke="#111" stroke-width="1"/></svg>
<div class="t" style="left:953px;top:665.6px;font-size:11.5px;color:#f0f0f0;font-style:italic">工作路径</div>
<div class="a" style="left:1178px;top:652px;width:3px;height:155px;background:#4b4b4b;"></div>
<svg style="left:0;top:0" width="1181" height="807"><ellipse cx="977.2" cy="679.15" rx="89.3" ry="31.1" fill="none" stroke="#ff0000" stroke-width="6.6"/><circle cx="1129.6" cy="719.6" r="2.6" fill="#ff0000"/></svg></body></html>
